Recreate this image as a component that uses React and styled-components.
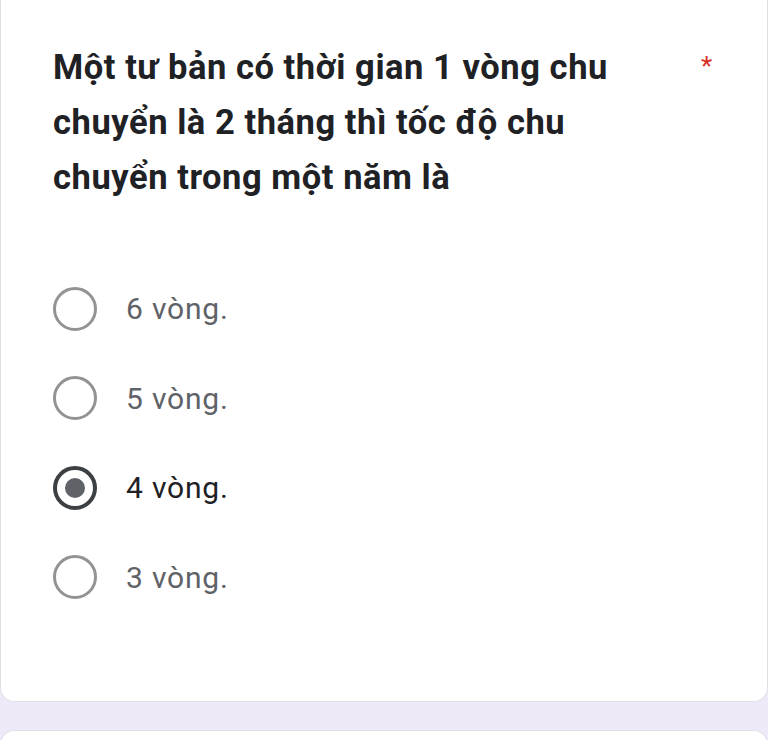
import styled, { createGlobalStyle } from "styled-components"

const GlobalStyle = createGlobalStyle`
  html, body {
    margin: 0;
    padding: 0;
    background: #ede9f7;
  }
  body {
    font-family: Roboto, "Noto Sans", Arial, sans-serif;
  }
`

const options = [
  { label: "6 vòng.", checked: false },
  { label: "5 vòng.", checked: false },
  { label: "4 vòng.", checked: true },
  { label: "3 vòng.", checked: false },
]

const App = () => {
  return (
    <>
      <GlobalStyle />
      <Page>
        <Card>
          <Header>
            <Question>
              Một tư bản có thời gian 1 vòng chu chuyển là 2 tháng thì tốc độ chu
              chuyển trong một năm là
            </Question>
            <Required>*</Required>
          </Header>
          <OptionList>
            {options.map((opt) => (
              <Option key={opt.label}>
                <Radio $checked={opt.checked}>
                  {opt.checked && <Dot />}
                </Radio>
                <Label $checked={opt.checked}>{opt.label}</Label>
              </Option>
            ))}
          </OptionList>
        </Card>
        <NextCard />
      </Page>
    </>
  )
}

const Page = styled.div`
  width: 768px;
  height: 740px;
  overflow: hidden;
  display: flex;
  flex-direction: column;
  gap: 28px;
`

const Card = styled.section`
  box-sizing: border-box;
  height: 702px;
  flex-shrink: 0;
  background: #fff;
  border: 1px solid #e2e0e6;
  border-top: none;
  border-radius: 0 0 14px 14px;
  padding: 40px 0 0 52px;
`

const NextCard = styled.div`
  flex-shrink: 0;
  height: 40px;
  background: #fff;
  border: 1px solid #e2e0e6;
  border-bottom: none;
  border-radius: 14px 14px 0 0;
`

const Header = styled.div`
  display: flex;
  align-items: flex-start;
`

const Question = styled.h2`
  margin: 0;
  width: 604px;
  font-size: 34.5px;
  font-weight: 700;
  letter-spacing: 0.55px;
  line-height: 55px;
  color: #202124;
`

const Required = styled.span`
  margin-left: 44px;
  margin-top: 6px;
  color: #d93025;
  font-size: 26px;
  line-height: 40px;
`

const OptionList = styled.div`
  margin-top: 59px;
  display: flex;
  flex-direction: column;
`

const Option = styled.label`
  display: flex;
  align-items: center;
  height: 89.5px;
`

const Radio = styled.span`
  box-sizing: border-box;
  width: 44px;
  height: 44px;
  border-radius: 50%;
  border: ${({ $checked }) => ($checked ? "4px solid #3c4043" : "3px solid #939393")};
  display: flex;
  align-items: center;
  justify-content: center;
`

const Dot = styled.span`
  width: 20px;
  height: 20px;
  border-radius: 50%;
  background: #5f6368;
`

const Label = styled.span`
  margin-left: 29px;
  font-size: 30px;
  letter-spacing: 0.8px;
  color: ${({ $checked }) => ($checked ? "#202124" : "#5f6368")};
`

export default App
